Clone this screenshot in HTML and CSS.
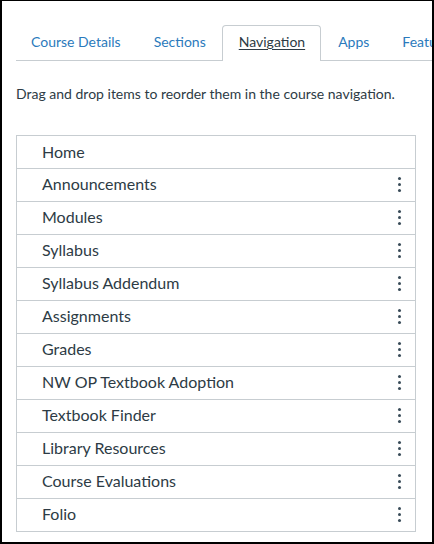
FILE: index.html
```html
<!DOCTYPE html>
<html>
<head>
<meta charset="utf-8">
<link rel="stylesheet" href="styles.css">
</head>
<body>
<div class="frame">
  <ul class="tabs">
    <li class="tab">Course Details</li>
    <li class="tab">Sections</li>
    <li class="tab active"><span>Navigation</span></li>
    <li class="tab">Apps</li>
    <li class="tab">Feature Options</li>
  </ul>
  <p class="hint">Drag and drop items to reorder them in the course navigation.</p>
  <ul class="nav-list">
    <li class="item"><span>Home</span></li>
    <li class="item"><span>Announcements</span><i class="kebab"></i></li>
    <li class="item"><span>Modules</span><i class="kebab"></i></li>
    <li class="item"><span>Syllabus</span><i class="kebab"></i></li>
    <li class="item"><span>Syllabus Addendum</span><i class="kebab"></i></li>
    <li class="item"><span>Assignments</span><i class="kebab"></i></li>
    <li class="item"><span>Grades</span><i class="kebab"></i></li>
    <li class="item"><span>NW OP Textbook Adoption</span><i class="kebab"></i></li>
    <li class="item"><span>Textbook Finder</span><i class="kebab"></i></li>
    <li class="item"><span>Library Resources</span><i class="kebab"></i></li>
    <li class="item"><span>Course Evaluations</span><i class="kebab"></i></li>
    <li class="item"><span>Folio</span><i class="kebab"></i></li>
  </ul>
</div>
</body>
</html>
```

FILE: styles.css
```css
html, body {
  margin: 0;
  padding: 0;
  background: #fff;
}
.frame {
  box-sizing: border-box;
  width: 434px;
  height: 544px;
  border-top: 1px solid #000;
  border-left: 2px solid #000;
  border-right: 2px solid #000;
  border-bottom: 2px solid #000;
  overflow: hidden;
  font-family: Lato, "Open Sans", sans-serif;
  color: #2d3b45;
  padding-top: 24px;
}
.tabs {
  list-style: none;
  margin: 0 0 0 14px;
  padding: 0;
  display: flex;
  white-space: nowrap;
  border-bottom: 1px solid #c7cdd1;
  height: 35px;
}
.tab {
  flex: none;
  box-sizing: border-box;
  height: 36px;
  padding: 0 15px 0 14px;
  border: 1px solid transparent;
  border-bottom: none;
  font-size: 14px;
  line-height: 32px;
  color: #2b7abc;
}
.tab + .tab {
  padding-left: 16px;
}
.tab.active {
  background: #fff;
  border-color: #c7cdd1;
  border-radius: 4px 4px 0 0;
  color: #2d3b45;
}
.tab.active span {
  text-decoration: underline;
  text-underline-offset: 2px;
}
.hint {
  margin: 23px 0 0 14px;
  font-size: 14px;
  line-height: 20px;
}
.nav-list {
  list-style: none;
  margin: 31px 0 0 14px;
  padding: 0;
  width: 400px;
  box-sizing: border-box;
  border: 1px solid #c7cdd1;
}
.item {
  display: flex;
  align-items: center;
  justify-content: space-between;
  box-sizing: border-box;
  height: 33px;
  padding: 0 14px 3px 25px;
  border-top: 1px solid #c7cdd1;
  font-size: 16px;
}
.item:first-child {
  height: 32px;
  border-top: none;
  padding-bottom: 2px;
}
.kebab {
  width: 3px;
  height: 3px;
  margin-top: 2px;
  border-radius: 50%;
  background: #394b58;
  box-shadow: 0 -6px 0 #394b58, 0 6px 0 #394b58;
}
```
